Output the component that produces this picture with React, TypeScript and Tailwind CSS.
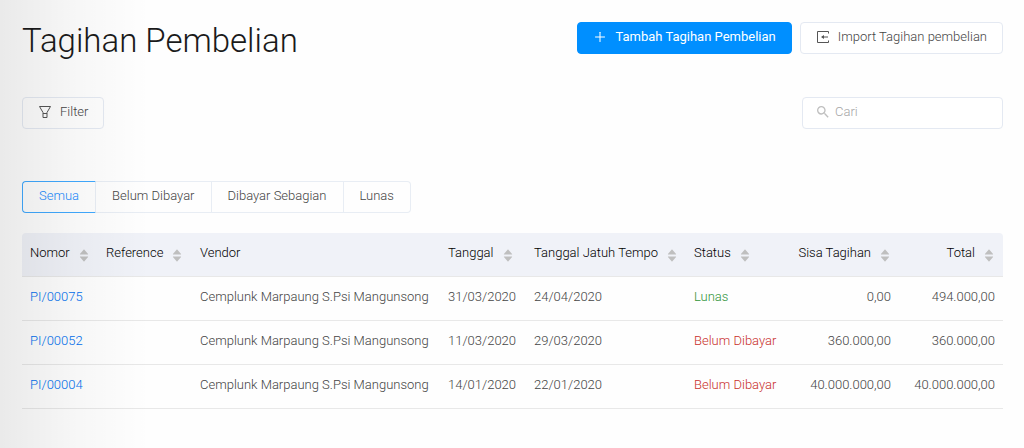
import React, { useState } from 'react';
import { AiFillCaretDown, AiFillCaretUp, AiOutlinePlus } from 'react-icons/ai';
import { MdSearch } from 'react-icons/md';

interface Invoice {
  nomor: string;
  reference: string;
  vendor: string;
  tanggal: string;
  jatuhTempo: string;
  status: 'Lunas' | 'Belum Dibayar' | 'Dibayar Sebagian';
  sisa: string;
  total: string;
}

const invoices: Invoice[] = [
  { nomor: 'PI/00075', reference: '', vendor: 'Cemplunk Marpaung S.Psi Mangunsong', tanggal: '31/03/2020', jatuhTempo: '24/04/2020', status: 'Lunas', sisa: '0,00', total: '494.000,00' },
  { nomor: 'PI/00052', reference: '', vendor: 'Cemplunk Marpaung S.Psi Mangunsong', tanggal: '11/03/2020', jatuhTempo: '29/03/2020', status: 'Belum Dibayar', sisa: '360.000,00', total: '360.000,00' },
  { nomor: 'PI/00004', reference: '', vendor: 'Cemplunk Marpaung S.Psi Mangunsong', tanggal: '14/01/2020', jatuhTempo: '22/01/2020', status: 'Belum Dibayar', sisa: '40.000.000,00', total: '40.000.000,00' },
];

const columns = [
  { label: 'Nomor', width: 'w-[76px]', sortable: true },
  { label: 'Reference', width: 'w-[94px]', sortable: true },
  { label: 'Vendor', width: '', sortable: false },
  { label: 'Tanggal', width: 'w-[86px]', sortable: true },
  { label: 'Tanggal Jatuh Tempo', width: 'w-[160px]', sortable: true },
  { label: 'Status', width: 'w-[102px]', sortable: true },
  { label: 'Sisa Tagihan', width: 'w-[111px]', sortable: true, right: true },
  { label: 'Total', width: 'w-[104px]', sortable: true, right: true },
];

const tabs = ['Semua', 'Belum Dibayar', 'Dibayar Sebagian', 'Lunas'];

const statusColor: Record<Invoice['status'], string> = {
  Lunas: 'text-[#2e9438]',
  'Belum Dibayar': 'text-[#c9302c]',
  'Dibayar Sebagian': 'text-[#fb8c00]',
};

const SortIcon: React.FC = () => (
  <span className="flex flex-col pt-1.5 text-[#bfbfbf]">
    <AiFillCaretUp className="h-3 w-3 -mb-1" />
    <AiFillCaretDown className="h-3 w-3 -mt-px" />
  </span>
);

const ImportIcon: React.FC = () => (
  <svg viewBox="0 0 14 14" className="h-3.5 w-3.5 text-[#555]" fill="none" stroke="currentColor" aria-hidden="true">
    <path d="M12.5 3.5v-2h-11v11h11v-2" />
    <path d="M12 7H6" />
    <path d="M8 5v4L5 7z" fill="currentColor" stroke="none" />
  </svg>
);

const FilterIcon: React.FC = () => (
  <svg viewBox="0 0 14 14" className="h-3.5 w-3.5 text-[#555]" fill="none" stroke="currentColor" aria-hidden="true">
    <path d="M1.5 1.5h11L9 7.5v5H5v-5z" strokeLinejoin="round" />
    <path d="M5 8.5h4" />
  </svg>
);

const App: React.FC = () => {
  const [activeTab, setActiveTab] = useState('Semua');

  const rows = invoices.filter((row) => activeTab === 'Semua' || row.status === activeTab);

  return (
    <div className="relative min-h-screen bg-[#fefefe] pr-[21px] pl-[22px] pt-[22px] pb-10 font-['Roboto',sans-serif] text-[13px] leading-5 font-light text-[#444]">
      {/* Title and actions */}
      <header className="flex items-start justify-between">
        <h1 className="text-[33px] leading-[38px] text-[#1a1a1a]">Tagihan Pembelian</h1>
        <div className="flex gap-2">
          <button className="flex h-8 items-center gap-2 rounded border border-[#008fff] bg-[#008fff] px-[15px] pb-[3px] font-normal text-white">
            <AiOutlinePlus className="h-3.5 w-3.5" />
            Tambah Tagihan Pembelian
          </button>
          <button className="flex h-8 items-center gap-2 rounded border border-[#e4e9f2] bg-white px-[15px] pb-[3px]">
            <ImportIcon />
            Import Tagihan pembelian
          </button>
        </div>
      </header>

      {/* Filter and search */}
      <div className="mt-[37px] flex items-center justify-between">
        <button className="flex h-8 items-center gap-2 rounded border border-[#e4e9f2] px-[15px] pb-[3px]">
          <FilterIcon />
          Filter
        </button>
        <label className="flex h-8 w-[201px] items-center gap-1 rounded border border-[#e4e9f2] bg-white px-3 pb-[3px]">
          <MdSearch className="h-4 w-4 shrink-0 text-[#bfbfbf]" />
          <input
            type="text"
            aria-label="Cari"
            placeholder="Cari"
            className="w-full min-w-0 bg-transparent outline-none placeholder:text-[#a6a6a6]"
          />
        </label>
      </div>

      {/* Status tabs */}
      <div className="mt-[52px] flex">
        {tabs.map((tab) => (
          <button
            key={tab}
            onClick={() => setActiveTab(tab)}
            className={`h-8 border-y border-r border-r-[#e8edf4] px-4 pb-[3px] first:rounded-l first:border-l last:rounded-r ${
              tab === activeTab ? 'border-y-[#40a9ff] border-l-[#40a9ff] text-[#1a8cff]' : 'border-y-[#e8edf4] border-l-[#e8edf4]'
            }`}
          >
            {tab}
          </button>
        ))}
      </div>

      <table className="mt-5 w-full table-fixed border-separate border-spacing-0">
        <thead>
          <tr>
            {columns.map((col) => (
              <th
                key={col.label}
                scope="col"
                className={`${col.width} h-11 border-b border-[#e8e8e8] bg-[#f0f2f8] px-2 pb-1 font-light whitespace-nowrap text-black first:rounded-tl last:rounded-tr`}
              >
                <div className={`flex items-center gap-2 ${col.right ? 'justify-end' : ''}`}>
                  <span>{col.label}</span>
                  {col.sortable && <SortIcon />}
                </div>
              </th>
            ))}
          </tr>
        </thead>
        <tbody className="[&_td]:h-11 [&_td]:border-b [&_td]:border-[#e8e8e8] [&_td]:px-2 [&_td]:pb-1 [&_td]:whitespace-nowrap">
          {rows.map((row) => (
            <tr key={row.nomor}>
              <td>
                <a href="#" className="text-[#0070f0]">{row.nomor}</a>
              </td>
              <td>{row.reference}</td>
              <td>{row.vendor}</td>
              <td>{row.tanggal}</td>
              <td>{row.jatuhTempo}</td>
              <td className={statusColor[row.status]}>{row.status}</td>
              <td className="text-right">{row.sisa}</td>
              <td className="text-right">{row.total}</td>
            </tr>
          ))}
        </tbody>
      </table>

      {/* Shadow cast by the side menu */}
      <div className="pointer-events-none absolute inset-y-0 left-0 w-[150px] bg-linear-to-r from-black/8 via-black/3 to-transparent" />
    </div>
  );
};

export default App;
